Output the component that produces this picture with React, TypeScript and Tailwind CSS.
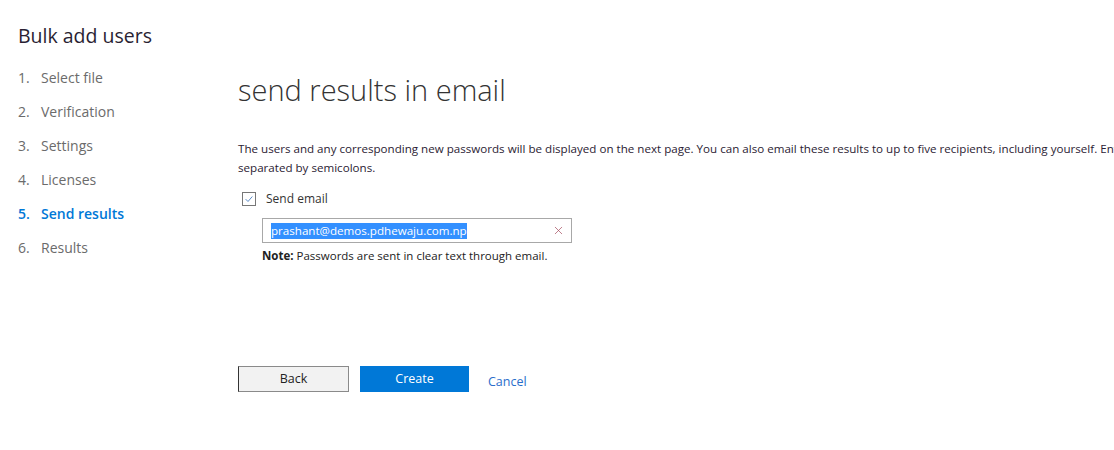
import { X } from 'lucide-react'

const steps = ['Select file', 'Verification', 'Settings', 'Licenses', 'Send results', 'Results']

export default function App() {
  const active = 4

  return (
    <div className="w-[1114px] h-[450px] overflow-hidden bg-white text-[#333] font-['Open_Sans',sans-serif] flex">
      {/* Wizard steps */}
      <aside className="w-[238px] shrink-0 pl-[18px] pt-[22px]">
        <h1 className="text-[19.5px] leading-[28px] text-[#2a1f33]">Bulk add users</h1>
        <ol className="mt-[10px] flex flex-col">
          {steps.map((step, i) => (
            <li
              key={step}
              className={`flex h-[34px] items-center text-[14px] ${
                i === active ? 'font-semibold text-[#0078d7]' : 'text-[#6b6b6b]'
              }`}
            >
              <span className="w-[23px]">{i + 1}.</span>
              <span>{step}</span>
            </li>
          ))}
        </ol>
      </aside>

      {/* Content */}
      <main className="flex-1 pt-[70px]">
        <h2 className="text-[29px] font-light leading-[40px] text-[#333]">send results in email</h2>

        <div className="mt-[29px] text-[11.6px] leading-[19px] text-[#2b2233] whitespace-nowrap">
          <p>
            The users and any corresponding new passwords will be displayed on the next page. You can also email
            these results to up to five recipients, including yourself. Enter email addresses
          </p>
          <p>separated by semicolons.</p>
        </div>

        <label className="mt-[13px] flex items-center gap-[10px] pl-[4px] text-[12px]">
          <span className="flex h-[14px] w-[14px] items-center justify-center border border-[#777]">
            <svg viewBox="0 0 12 12" className="h-[10px] w-[10px]">
              <path d="M2 6.2 L4.8 9 L10 3" fill="none" stroke="#4a7fc1" strokeWidth="1.1" />
            </svg>
          </span>
          <span>Send email</span>
        </label>

        <div className="ml-[24px] mt-[10px] flex h-[25px] w-[310px] items-center border border-[#a8a8a8] pl-[8px] pr-[6px]">
          <span className="bg-[#3390ff] text-white text-[11.6px] leading-[16px]">prashant@demos.pdhewaju.com.np</span>
          <X className="ml-auto h-[13px] w-[13px] text-[#a44a5c]" strokeWidth={1.3} />
        </div>

        <p className="ml-[24px] mt-[4px] text-[11.5px] leading-[18px] text-[#222]">
          <span className="font-bold">Note:</span> Passwords are sent in clear text through email.
        </p>

        <div className="mt-[101px] flex items-center">
          <button className="h-[26px] w-[111px] border border-[#8a8a8a] border-l-[#333] bg-[#f2f2f2] text-[12.5px] text-[#222]">
            Back
          </button>
          <button className="ml-[11px] h-[26px] w-[109px] bg-[#0078d7] text-[12.5px] text-white">Create</button>
          <a className="ml-[19px] mt-[6px] text-[12.5px] text-[#2a6ecb]">Cancel</a>
        </div>
      </main>
    </div>
  )
}
